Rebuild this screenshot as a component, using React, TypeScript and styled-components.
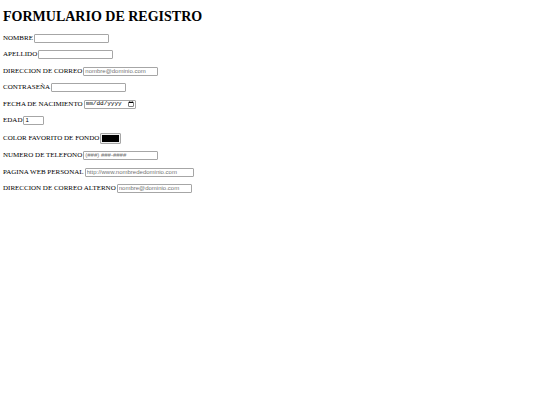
import React, { useId } from "react";
import styled, { createGlobalStyle, css } from "styled-components";

const GlobalStyle = createGlobalStyle`
  body {
    margin: 0;
    background: #fff;
    color: #000;
    font-family: "Liberation Serif", "Times New Roman", serif;
    font-size: 7px;
  }
`;

const Page = styled.main`
  padding: 9px 3px;
`;

const Title = styled.h1`
  margin: 0 0 9px;
  font-size: 14px;
  line-height: 16px;
`;

const Form = styled.form`
  display: flex;
  flex-direction: column;
  gap: 8px;
`;

const Group = styled.div`
  display: flex;
  flex-direction: column;
  gap: 7px;
`;

const Row = styled.div`
  display: flex;
  align-items: center;
  gap: 1px;
`;

const Label = styled.label`
  line-height: 9px;
  white-space: nowrap;
`;

const control = css`
  box-sizing: border-box;
  margin: 0;
  border: 1px solid #a6a6a6;
  border-radius: 1px;
  background: #fff;
`;

const Field = styled.input<{ $width: number }>`
  ${control}
  width: ${({ $width }) => $width}px;
  height: 9px;
  padding: 0 1px 1px;
  color: #000;
  font-family: "Liberation Sans", Arial, sans-serif;
  font-size: 6px;
  line-height: 6px;

  &::placeholder {
    color: #757575;
  }

  &::-webkit-inner-spin-button {
    appearance: none;
    margin: 0;
  }
`;

const DateField = styled(Field)`
  font-family: "Liberation Mono", "Courier New", monospace;

  &::-webkit-datetime-edit,
  &::-webkit-datetime-edit-fields-wrapper {
    padding: 0;
  }

  &::-webkit-datetime-edit-month-field,
  &::-webkit-datetime-edit-day-field,
  &::-webkit-datetime-edit-year-field {
    padding: 0;
  }

  &::-webkit-calendar-picker-indicator {
    width: 6px;
    height: 6px;
    padding: 0;
    margin: 0;
  }
`;

const ColorField = styled.input`
  ${control}
  width: 21px;
  height: 11px;
  padding: 1px;
  background: #efefef;

  &::-webkit-color-swatch-wrapper {
    padding: 0;
  }

  &::-webkit-color-swatch {
    border: none;
  }
`;

type EntryProps = {
  label: string;
  type?: string;
  width?: number;
  placeholder?: string;
  defaultValue?: string;
};

function Entry({ label, type = "text", width = 75, ...rest }: EntryProps) {
  const id = useId();
  return (
    <Row>
      <Label htmlFor={id}>{label}</Label>
      {type === "color" ? (
        <ColorField id={id} type="color" {...rest} />
      ) : type === "date" ? (
        <DateField id={id} type="date" $width={width} {...rest} />
      ) : (
        <Field id={id} type={type} $width={width} {...rest} />
      )}
    </Row>
  );
}

export default function App() {
  return (
    <>
      <GlobalStyle />
      <Page>
        <Title>FORMULARIO DE REGISTRO</Title>
        <Form>
          <Group>
            <Entry label="NOMBRE" />
            <Entry label="APELLIDO" />
          </Group>
          <Group>
            <Entry label="DIRECCION DE CORREO" type="email" placeholder="nombre@dominio.com" />
            <Entry label="CONTRASEÑA" type="password" />
          </Group>
          <Group>
            <Entry label="FECHA DE NACIMIENTO" type="date" width={52} />
            <Entry label="EDAD" type="number" width={21} defaultValue="1" />
          </Group>
          <Group>
            <Entry label="COLOR FAVORITO DE FONDO" type="color" defaultValue="#000000" />
            <Entry label="NUMERO DE TELEFONO" type="tel" placeholder="(###) ###-####" />
          </Group>
          <Group>
            <Entry label="PAGINA WEB PERSONAL" type="url" width={109} placeholder="http://www.nombrededominio.com" />
            <Entry label="DIRECCION DE CORREO ALTERNO" type="email" placeholder="nombre@dominio.com" />
          </Group>
        </Form>
      </Page>
    </>
  );
}
